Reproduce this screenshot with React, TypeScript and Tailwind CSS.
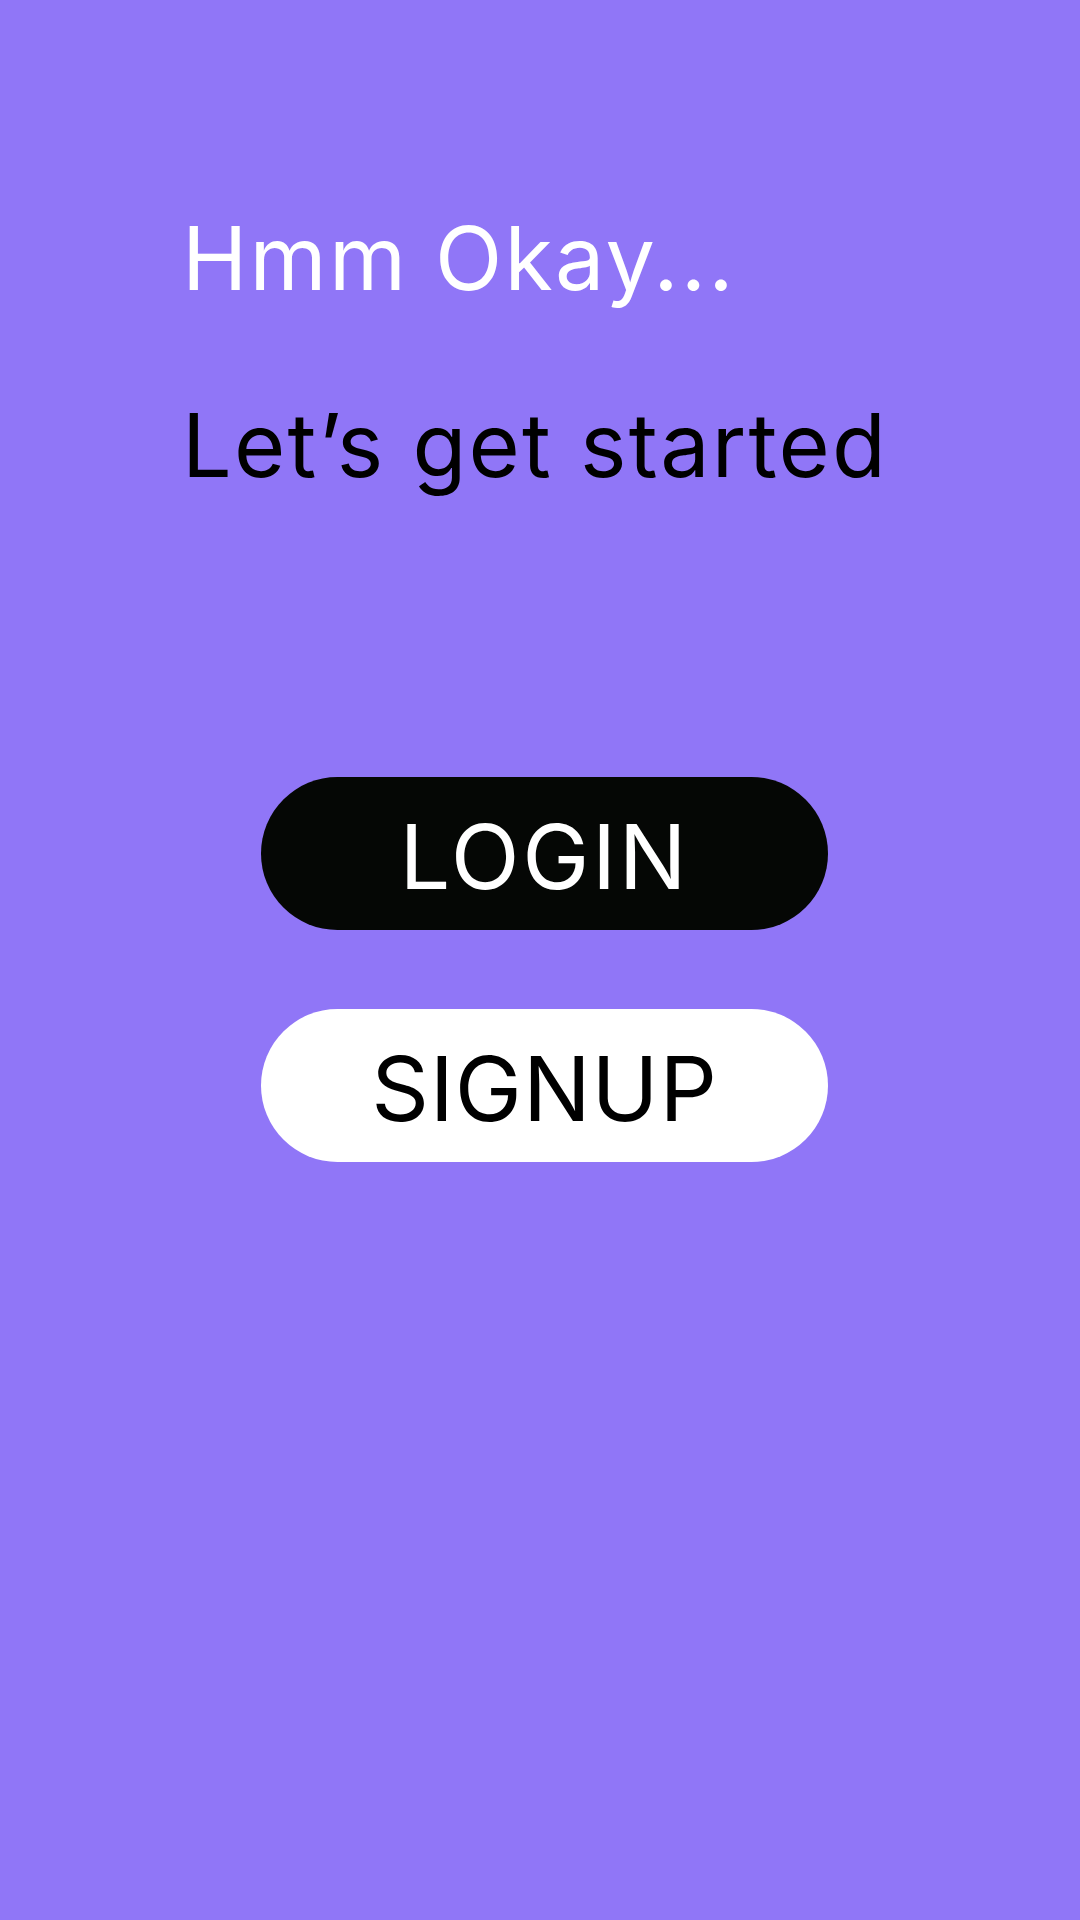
import React from "react";

export default function App() {
  return (
    <div
      className="w-[1080px] h-[1920px] bg-[#9076f7] flex flex-col"
      style={{ fontFamily: "Inter, 'Noto Sans', sans-serif" }}
    >
      <div className="pl-[182px] pt-[214px] flex flex-col">
        <h1 className="text-[88px] leading-none font-normal tracking-[0.025em] text-white">Hmm Okay...</h1>
        <h2 className="mt-[99px] text-[88px] leading-none font-normal tracking-[0.025em] text-black">Let’s get started</h2>
      </div>
      <div className="pl-[261px] mt-[288px] flex flex-col gap-[79px]">
        <button className="w-[567px] h-[153px] rounded-full bg-[#050705] text-white text-[90px] leading-none font-normal tracking-[0.03em] pt-[6px] flex items-center justify-center">
          LOGIN
        </button>
        <button className="w-[567px] h-[153px] rounded-full bg-white text-black text-[90px] leading-none font-normal tracking-[0.01em] pt-[6px] flex items-center justify-center">
          SIGNUP
        </button>
      </div>
    </div>
  );
}
